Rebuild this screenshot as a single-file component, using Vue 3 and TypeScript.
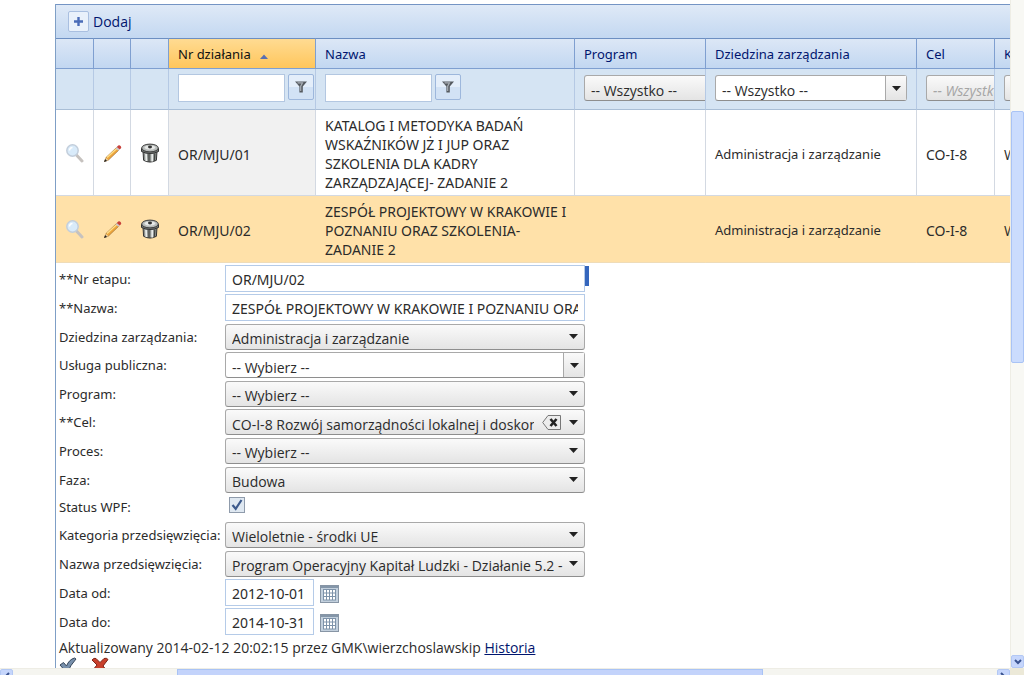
<script setup lang="ts">
import { ref } from 'vue'

interface Row {
  nr: string
  nazwa: string
  dziedzina: string
  cel: string
  kategoria: string
}

interface Field {
  id: string
  label: string
  kind: 'text' | 'list' | 'open' | 'clear' | 'check' | 'date'
  value: string
}

const rows: Row[] = [
  {
    nr: 'OR/MJU/01',
    nazwa: 'KATALOG I METODYKA BADAŃ WSKAŹNIKÓW JŻ I JUP ORAZ SZKOLENIA DLA KADRY ZARZĄDZAJĄCEJ- ZADANIE 2',
    dziedzina: 'Administracja i zarządzanie',
    cel: 'CO-I-8',
    kategoria: 'W',
  },
  {
    nr: 'OR/MJU/02',
    nazwa: 'ZESPÓŁ PROJEKTOWY W KRAKOWIE I POZNANIU ORAZ SZKOLENIA- ZADANIE 2',
    dziedzina: 'Administracja i zarządzanie',
    cel: 'CO-I-8',
    kategoria: 'W',
  },
]

const fields = ref<Field[]>([
  { id: 'nr', label: '**Nr etapu:', kind: 'text', value: 'OR/MJU/02' },
  { id: 'nazwa', label: '**Nazwa:', kind: 'text', value: 'ZESPÓŁ PROJEKTOWY W KRAKOWIE I POZNANIU ORAZ SZKOLENIA- ZADANIE 2' },
  { id: 'dziedzina', label: 'Dziedzina zarządzania:', kind: 'list', value: 'Administracja i zarządzanie' },
  { id: 'usluga', label: 'Usługa publiczna:', kind: 'open', value: '-- Wybierz --' },
  { id: 'program', label: 'Program:', kind: 'list', value: '-- Wybierz --' },
  { id: 'cel', label: '**Cel:', kind: 'clear', value: 'CO-I-8 Rozwój samorządności lokalnej i doskonalenie' },
  { id: 'proces', label: 'Proces:', kind: 'list', value: '-- Wybierz --' },
  { id: 'faza', label: 'Faza:', kind: 'list', value: 'Budowa' },
  { id: 'status', label: 'Status WPF:', kind: 'check', value: 'on' },
  { id: 'kategoria', label: 'Kategoria przedsięwzięcia:', kind: 'list', value: 'Wieloletnie - środki UE' },
  { id: 'przedsiewziecie', label: 'Nazwa przedsięwzięcia:', kind: 'list', value: 'Program Operacyjny Kapitał Ludzki - Działanie 5.2 -' },
  { id: 'od', label: 'Data od:', kind: 'date', value: '2012-10-01' },
  { id: 'do', label: 'Data do:', kind: 'date', value: '2014-10-31' },
])

const filterNr = ref('')
const filterNazwa = ref('')
</script>

<template>
  <div class="window">
    <main class="content">
      <div class="panel">
        <div class="toolbar">
          <button class="add" type="button">
            <span class="add-icon">
              <svg width="11" height="11" viewBox="0 0 11 11"><path d="M5.5 1v9M1 5.5h9" stroke="#4a6cb8" stroke-width="2.4" /></svg>
            </span>
            Dodaj
          </button>
        </div>

        <table class="grid">
          <colgroup>
            <col class="c-view" /><col class="c-icon" /><col class="c-trash" />
            <col class="c-nr" /><col class="c-nazwa" /><col class="c-program" />
            <col class="c-dziedzina" /><col class="c-cel" /><col />
          </colgroup>
          <thead>
            <tr class="head">
              <th></th><th></th><th></th>
              <th class="sorted">Nr działania
                <svg class="sort" width="8" height="5" viewBox="0 0 8 5"><path d="M0 5L4 0.5L8 5z" fill="#5a6fb0" /></svg>
              </th>
              <th>Nazwa</th>
              <th>Program</th>
              <th>Dziedzina zarządzania</th>
              <th>Cel</th>
              <th>K</th>
            </tr>
            <tr class="filters">
              <td></td><td></td><td></td>
              <td>
                <div class="filter">
                  <input v-model="filterNr" type="text" aria-label="Nr działania" />
                  <button type="button" aria-label="Filtruj nr działania">
                    <svg width="14" height="14" viewBox="0 0 14 14"><path d="M1 1.5h12L8.8 6.5V12.5H5.4V6.5z" fill="#555a60" /><path d="M3.5 2.8h5L6.7 6.2V11" fill="none" stroke="#a9afb6" stroke-width="1.2" /></svg>
                  </button>
                </div>
              </td>
              <td>
                <div class="filter">
                  <input v-model="filterNazwa" type="text" aria-label="Nazwa" />
                  <button type="button" aria-label="Filtruj nazwę">
                    <svg width="14" height="14" viewBox="0 0 14 14"><path d="M1 1.5h12L8.8 6.5V12.5H5.4V6.5z" fill="#555a60" /><path d="M3.5 2.8h5L6.7 6.2V11" fill="none" stroke="#a9afb6" stroke-width="1.2" /></svg>
                  </button>
                </div>
              </td>
              <td>
                <div class="combo list"><select aria-label="Program"><option>-- Wszystko --</option></select></div>
              </td>
              <td>
                <div class="combo open">
                  <select aria-label="Dziedzina zarządzania"><option>-- Wszystko --</option></select>
                  <span class="arrow"><svg width="9" height="5" viewBox="0 0 9 5"><path d="M0 0h9L4.5 5z" fill="#222" /></svg></span>
                </div>
              </td>
              <td>
                <div class="combo list off"><select aria-label="Cel" disabled><option>-- Wszystko --</option></select></div>
              </td>
              <td>
                <div class="combo list"><select aria-label="K"><option></option></select></div>
              </td>
            </tr>
          </thead>
          <tbody>
            <tr v-for="(row, i) in rows" :key="row.nr" :class="{ selected: i === 1 }">
              <td class="action">
                <button type="button" aria-label="Podgląd">
                  <svg width="20" height="20" viewBox="0 0 20 20">
                    <path d="M11 11.5L17 18" stroke="#c6c2bf" stroke-width="3" stroke-linecap="round" />
                    <circle cx="7.5" cy="7.5" r="5.7" fill="#d9ebfa" stroke="#c3cedb" stroke-width="1.5" />
                    <path d="M4.5 7.5a3 3 0 0 1 3-3" fill="none" stroke="#fff" stroke-width="1.5" />
                  </svg>
                </button>
              </td>
              <td class="action">
                <button type="button" aria-label="Edytuj">
                  <svg width="20" height="20" viewBox="0 0 20 20">
                    <path d="M1.5 18.5L3 14.5L13.5 4.5L16 7L5.5 17z" fill="#eda53c" stroke="#94672f" stroke-width=".6" />
                    <path d="M4 14.5L13.8 5.5" stroke="#ffe08a" stroke-width="1.3" />
                    <path d="M2.8 14.8L5.3 17L1.5 18.5z" fill="#e9cfa0" /><path d="M2.2 16L4 18L1 19z" fill="#222" />
                    <path d="M12.7 5.2L14 4L16.6 6.6L15.4 7.8z" fill="#c9c9cf" />
                    <path d="M13.8 4L15.2 2.6Q16.4 1.8 17.6 2.9T18 5.2L16.6 6.6z" fill="#c8403a" />
                  </svg>
                </button>
              </td>
              <td class="action">
                <button type="button" aria-label="Usuń">
                  <svg width="20" height="20" viewBox="0 0 20 20">
                    <path d="M3 8L3.600 17.300Q10 20.800 16.400 17.300L17 8z" fill="#8d918f" stroke="#333" />
                    <path d="M6 10.5L6.4 18M12.2 11V18.5" stroke="#e9ecea" stroke-width="1.8" />
                    <path d="M9 11v8M14.8 10.5L14.4 18" stroke="#414442" stroke-width="1.2" />
                    <path d="M1.5 5.5v3Q10 12.5 18.5 8.5v-3z" fill="#777b79" stroke="#333" />
                    <ellipse cx="10" cy="5" rx="8.3" ry="3.9" fill="#b8bcba" stroke="#3a3a3a" />
                    <ellipse cx="10" cy="4.5" rx="5.5" ry="2" fill="#e6e8e7" /><ellipse cx="10" cy="4" rx="2" ry="1.4" fill="#333" />
                  </svg>
                </button>
              </td>
              <td class="sorted caps">{{ row.nr }}</td>
              <td class="caps">{{ row.nazwa }}</td>
              <td></td>
              <td class="small">{{ row.dziedzina }}</td>
              <td class="caps">{{ row.cel }}</td>
              <td class="cut">{{ row.kategoria }}</td>
            </tr>
          </tbody>
        </table>

        <form class="editor" @submit.prevent>
          <div v-for="f in fields" :key="f.id" class="row" :class="f.kind">
            <label :for="f.id">{{ f.label }}</label>
            <div v-if="f.kind === 'text'" class="field">
              <input :id="f.id" v-model="f.value" class="caps" type="text" />
              <span v-if="f.id === 'nr'" class="marker"></span>
            </div>
            <div v-else-if="f.kind === 'check'" class="field">
              <input :id="f.id" class="box" type="checkbox" checked />
              <svg class="tick" width="12" height="12" viewBox="0 0 12 12"><path d="M1.5 6L4.7 9.8L10.5 1" fill="none" stroke="#3c5a8c" stroke-width="2.2" /></svg>
            </div>
            <div v-else-if="f.kind === 'date'" class="field">
              <input :id="f.id" v-model="f.value" class="caps" type="text" />
              <button class="calendar" type="button" aria-label="Kalendarz">
                <svg width="19" height="18" viewBox="0 0 19 18">
                  <rect x=".5" y=".5" width="18" height="17" fill="#c3d0dd" stroke="#8795a5" />
                  <path d="M1 1h17v2H1z" fill="#8496a9" />
                  <path d="M3 4h13v11H3z" fill="#fff" />
                  <path d="M3 4.5h13M3 8h13M3 11.5h13M3 15h13M3.5 4v11M6.5 4v11M9.5 4v11M12.5 4v11M15.5 4v11" stroke="#7e93aa" />
                </svg>
              </button>
            </div>
            <div v-else class="field">
              <div class="combo" :class="f.kind">
                <select :id="f.id" v-model="f.value"><option>{{ f.value }}</option></select>
                <button v-if="f.kind === 'clear'" class="erase" type="button" aria-label="Wyczyść">
                  <svg width="19" height="15" viewBox="0 0 19 15">
                    <path d="M6 .5H18.5V14.5H6L.7 7.5z" fill="#ececec" stroke="#777" />
                    <path d="M8.5 4L14.5 11M14.5 4L8.5 11" stroke="#222" stroke-width="2.6" />
                  </svg>
                </button>
                <span class="arrow"><svg width="9" height="5" viewBox="0 0 9 5"><path d="M0 0h9L4.5 5z" fill="#222" /></svg></span>
              </div>
            </div>
          </div>
          <p class="updated">Aktualizowany 2014-02-12 20:02:15 przez GMK\wierzchoslawskip <a href="#">Historia</a></p>
          <div class="commands">
            <button type="submit" aria-label="Zapisz">
              <svg width="18" height="18" viewBox="0 0 18 18"><path d="M1 8L4.5 5.5L7.5 9Q10 2.5 15.5 1L17 2Q11.5 8 8 16z" fill="#7890ac" stroke="#35465a" /></svg>
            </button>
            <button type="button" aria-label="Anuluj">
              <svg width="18" height="18" viewBox="0 0 18 18"><path d="M1 3Q3 .5 5 1.5L9 5.5L13 1.5Q15.500 .5 17 2.500L12 9L17 15L13 17L9 12L4 17L1 14L6 8z" fill="#c9402c" stroke="#7d2418" /></svg>
            </button>
          </div>
        </form>
      </div>
    </main>

    <div class="vbar" aria-hidden="true">
      <span class="thumb"></span>
      <span class="step"><svg width="8" height="6" viewBox="0 0 8 6"><path d="M1 1L4 4L7 1" fill="none" stroke="#3a5390" stroke-width="2" /></svg></span>
    </div>
    <div class="hbar" aria-hidden="true">
      <span class="step"><svg width="6" height="8" viewBox="0 0 6 8"><path d="M5 1L2 4L5 7" fill="none" stroke="#3a5390" stroke-width="2" /></svg></span>
      <span class="thumb"></span>
      <span class="step"><svg width="6" height="8" viewBox="0 0 6 8"><path d="M1 1L4 4L1 7" fill="none" stroke="#3a5390" stroke-width="2" /></svg></span>
    </div>
    <div class="corner"></div>
  </div>
</template>

<style>
body {
  margin: 0;
  overflow: hidden;
}
</style>

<style scoped>
* {
  box-sizing: border-box;
}
.window {
  display: grid;
  grid-template: minmax(0, 1fr) 7px / minmax(0, 1fr) 14px;
  height: 100vh;
  background: #fff;
  color: #2b2b2b;
  font: 14px/19px "Open Sans", "Noto Sans", sans-serif;
}
input,
select,
button {
  margin: 0;
  font: inherit;
  color: inherit;
}
.caps,
.small,
.head th,
.row label {
  font-family: "Noto Sans", "Open Sans", sans-serif;
}
.small,
.head th,
.row label {
  font-size: 13px;
}
button {
  padding: 0;
  border: 0;
  background: none;
}
svg {
  display: block;
}
.content {
  overflow: hidden;
  padding: 4px 0 0 55px;
}
.panel {
  border-left: 1px solid #7f9fc6;
}
.toolbar {
  display: flex;
  align-items: center;
  height: 34px;
  padding: 0 12px;
  border-top: 1px solid #7494c4;
  background: linear-gradient(#dfe9f7, #c3d8f1);
}
.add {
  display: flex;
  align-items: center;
  gap: 4px;
  color: #00156e;
}
.add-icon {
  display: grid;
  place-items: center;
  width: 21px;
  height: 21px;
  border: 1px solid #a9bfe0;
  border-radius: 2px;
  background: #e9f1fb;
}
.grid {
  width: 100%;
  table-layout: fixed;
  border-collapse: separate;
  border-spacing: 0;
}
.c-view,
.c-trash {
  width: 38px;
}
.c-icon {
  width: 37px;
}
.c-nr {
  width: 147px;
}
.c-nazwa {
  width: 259px;
}
.c-program {
  width: 131px;
}
.c-dziedzina {
  width: 211px;
}
.c-cel {
  width: 78px;
}
th,
td {
  overflow: hidden;
  padding: 0 0 0 9px;
  border-right: 1px solid #d3d9e2;
  text-align: left;
  font-weight: normal;
}
.head th {
  height: 31px;
  padding-top: 2px;
  border-top: 1px solid #6d8fc2;
  border-right-color: #7f9fd0;
  border-bottom: 1px solid #7f9fd0;
  background: linear-gradient(#dce7f6, #c2d7f1);
  color: #00156e;
  white-space: nowrap;
}
.head .sorted {
  background: linear-gradient(#ffdb92, #ffc65c);
  color: #111;
}
.sort {
  display: inline-block;
  margin-left: 6px;
}
.filters td {
  height: 41px;
  padding-bottom: 2px;
  border-right-color: #b5c9e4;
  border-bottom: 1px solid #a9bed6;
  background: #d5e4f3;
}
.grid th:last-child,
.grid td:last-child {
  border-right: 0;
}
.filter {
  display: flex;
  gap: 3px;
}
.filter input {
  width: 107px;
  height: 28px;
  border: 1px solid #b3c7e1;
  background: #fff;
}
.filter button {
  display: grid;
  flex: none;
  place-items: center;
  width: 26px;
  height: 26px;
  border: 1px solid #9db7dc;
  border-radius: 2px;
  background: linear-gradient(#e4eefa 50%, #d2e2f5 50%);
}
tbody td {
  height: 66px;
  padding: 6px 6px 3px 9px;
  border-bottom: 1px solid #d3d9e2;
}
tbody .sorted {
  background: #f1f1f1;
}
tbody .selected td {
  border-right-color: #ffe1a9;
  border-bottom-color: #efdcb8;
  background: #ffe1a9;
}
tbody .cut {
  padding-right: 0;
}
tbody .action {
  padding-top: 3px;
}
.action button {
  display: block;
}
.combo {
  position: relative;
  width: 100%;
  height: 26px;
  border: 1px solid #a9a9a9;
  border-bottom-color: #8e8e8e;
  border-radius: 3px;
  background: linear-gradient(#fafafa, #e4e4e4);
}
.filters .combo {
  width: 192px;
}
.combo select {
  display: block;
  width: 100%;
  height: 24px;
  padding: 4px 20px 0 6px;
  border: 0;
  background: none;
  appearance: none;
  opacity: 1;
}
.combo .arrow {
  position: absolute;
  top: 0;
  right: 0;
  bottom: 0;
  display: grid;
  place-items: center;
  width: 21px;
  pointer-events: none;
}
.combo.open {
  background: #fff;
}
.combo.open .arrow {
  border-left: 1px solid #a9a9a9;
  background: linear-gradient(#fafafa, #e4e4e4);
}
.combo.clear select {
  padding-right: 50px;
}
.combo .erase {
  position: absolute;
  top: 5px;
  right: 23px;
}
.off select {
  color: #a5a5a5;
  font-style: italic;
}
.editor {
  padding: 1px 0 0 3px;
}
.row {
  display: grid;
  grid-template-columns: 166px 360px;
  align-items: center;
  height: 29px;
}
.row.open,
.row.clear {
  height: 28px;
}
.row.check {
  height: 26px;
}
.row label {
  padding-top: 1px;
  white-space: nowrap;
}
.field {
  display: flex;
  position: relative;
}
.row.text input,
.row.date input {
  width: 100%;
  height: 27px;
  padding: 2px 6px 0;
  border: 1px solid #b5cbe8;
  background: #fff;
}
.row.date input {
  width: 89px;
}
.calendar {
  margin: 2px 0 0 6px;
}
.marker {
  position: absolute;
  left: 100%;
  top: 1px;
  width: 4px;
  height: 20px;
  background: #3566bd;
}
.box {
  width: 16px;
  height: 16px;
  margin: 0 0 4px 4px;
  border: 1px solid #8f9bab;
  background: #dfe8f1;
  appearance: none;
}
.tick {
  position: absolute;
  left: 6px;
  top: 2px;
  pointer-events: none;
}
.updated {
  margin: 2px 0 0;
}
.updated a {
  color: #00156e;
}
.commands {
  display: flex;
  gap: 14px;
}
.vbar {
  display: grid;
  grid-template-rows: 111fr 252fr 292fr 13px;
  border-left: 1px solid #eeede5;
  background: #f8f8f4;
}
.vbar .thumb {
  grid-row: 2;
  border: 1px solid #a9c3f5;
  border-radius: 2px;
  background: #cbdcfd;
}
.step {
  display: grid;
  place-items: center;
  border: 1px solid #b3c8f4;
  border-radius: 2px;
  background: #c6d6fc;
}
.vbar .step {
  grid-row: 4;
}
.hbar {
  display: grid;
  grid-template-columns: 13px 164fr 587fr 234fr 13px;
  overflow: hidden;
  border-top: 1px solid #eeede5;
  background: #f5f5f0;
}
.hbar .thumb {
  grid-column: 3;
  border: 1px solid #a9c3f5;
  background: #c3d3fb;
}
.hbar .step {
  height: 13px;
}
.hbar .step:last-child {
  grid-column: 5;
}
.corner {
  background: #ece9d8;
}
</style>
